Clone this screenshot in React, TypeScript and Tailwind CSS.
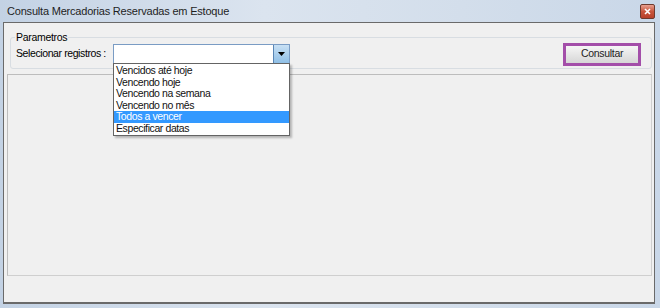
import React from "react";

const items = [
  "Vencidos até hoje",
  "Vencendo hoje",
  "Vencendo na semana",
  "Vencendo no mês",
  "Todos a vencer",
  "Especificar datas",
];

export default function App() {
  const selected = 4;

  return (
    <div
      className="relative w-[660px] h-[308px] overflow-hidden bg-[linear-gradient(90deg,#c3d2e4,#dbe4ef_40%,#d3deeb_70%,#c9d7e8)] flex flex-col text-[#000]"
      style={{ fontFamily: '"Liberation Sans", Arial, sans-serif' }}
    >
      {/* title bar */}
      <div className="h-[22px] flex items-center justify-between pl-[7px] pr-[5px]">
        <span className="text-[11px] text-[#1e1e1e] tracking-[-0.2px] whitespace-nowrap">
          Consulta Mercadorias Reservadas em Estoque
        </span>
        <button className="w-[15px] h-[15px] rounded-[2px] border border-[#6e3a2e] bg-[linear-gradient(#e8a090,#c8553c_50%,#b8402a)] flex items-center justify-center">
          <svg width="7" height="7" viewBox="0 0 7 7">
            <path d="M1 1 L6 6 M6 1 L1 6" stroke="#fff" strokeWidth="1.6" />
          </svg>
        </button>
      </div>

      {/* client */}
      <div className="ml-[3px] mr-[5px] h-[282px] border border-[#6a6a6a] border-b-[2px] bg-[#f0f0f0] flex flex-col">
        <fieldset className="mt-[9px] ml-[6px] mr-[2px] h-[37px] border border-[#d8dde2] rounded-[3px] px-[5px] relative">
          <legend className="text-[10.5px] tracking-[-0.3px] px-[1px] leading-[11px] -ml-[1px] whitespace-nowrap">Parametros</legend>
          <div className="flex items-center h-[22px]">
            <span className="text-[10.5px] tracking-[-0.4px] w-[97px] whitespace-nowrap">Selecionar registros :</span>
            <div className="w-[177px] h-[20px] border border-[#7a9cc4] bg-white flex justify-end">
              <div className="w-[16px] h-full bg-[linear-gradient(#c8e0f4,#8fbfe6)] border-l border-[#5a86b5] flex items-center justify-center">
                <svg width="7" height="4" viewBox="0 0 7 4">
                  <path d="M0 0 H7 L3.5 4 Z" fill="#000" />
                </svg>
              </div>
            </div>
            <div className="ml-auto mr-[5px] w-[78px] h-[23px] border-[3px] border-[#a34ea9] bg-[linear-gradient(#f6f6f6,#e6e6e6_50%,#d6d6d6)] flex items-center justify-center">
              <span className="text-[10.5px] tracking-[-0.3px] text-[#222]">Consultar</span>
            </div>
          </div>
        </fieldset>

        <div className="mt-[5px] ml-[3px] mr-[2px] h-[202px] border border-[#cfcfcf] border-t-[#bdbdbd] border-l-[#bdbdbd]" />
      </div>

      {/* dropdown list */}
      <div className="absolute left-[113px] top-[63px] w-[177px] border border-[#646464] bg-white shadow-[2px_2px_2px_rgba(0,0,0,0.25)] py-[1px]">
        {items.map((it, i) => (
          <div
            key={it}
            className={
              i === selected
                ? "h-[11.5px] leading-[11.5px] text-[10.5px] tracking-[-0.4px] px-[2px] bg-[#3399ff] text-white whitespace-nowrap"
                : "h-[11.5px] leading-[11.5px] text-[10.5px] tracking-[-0.4px] px-[2px] text-[#111] whitespace-nowrap"
            }
          >
            {it}
          </div>
        ))}
      </div>
    </div>
  );
}
